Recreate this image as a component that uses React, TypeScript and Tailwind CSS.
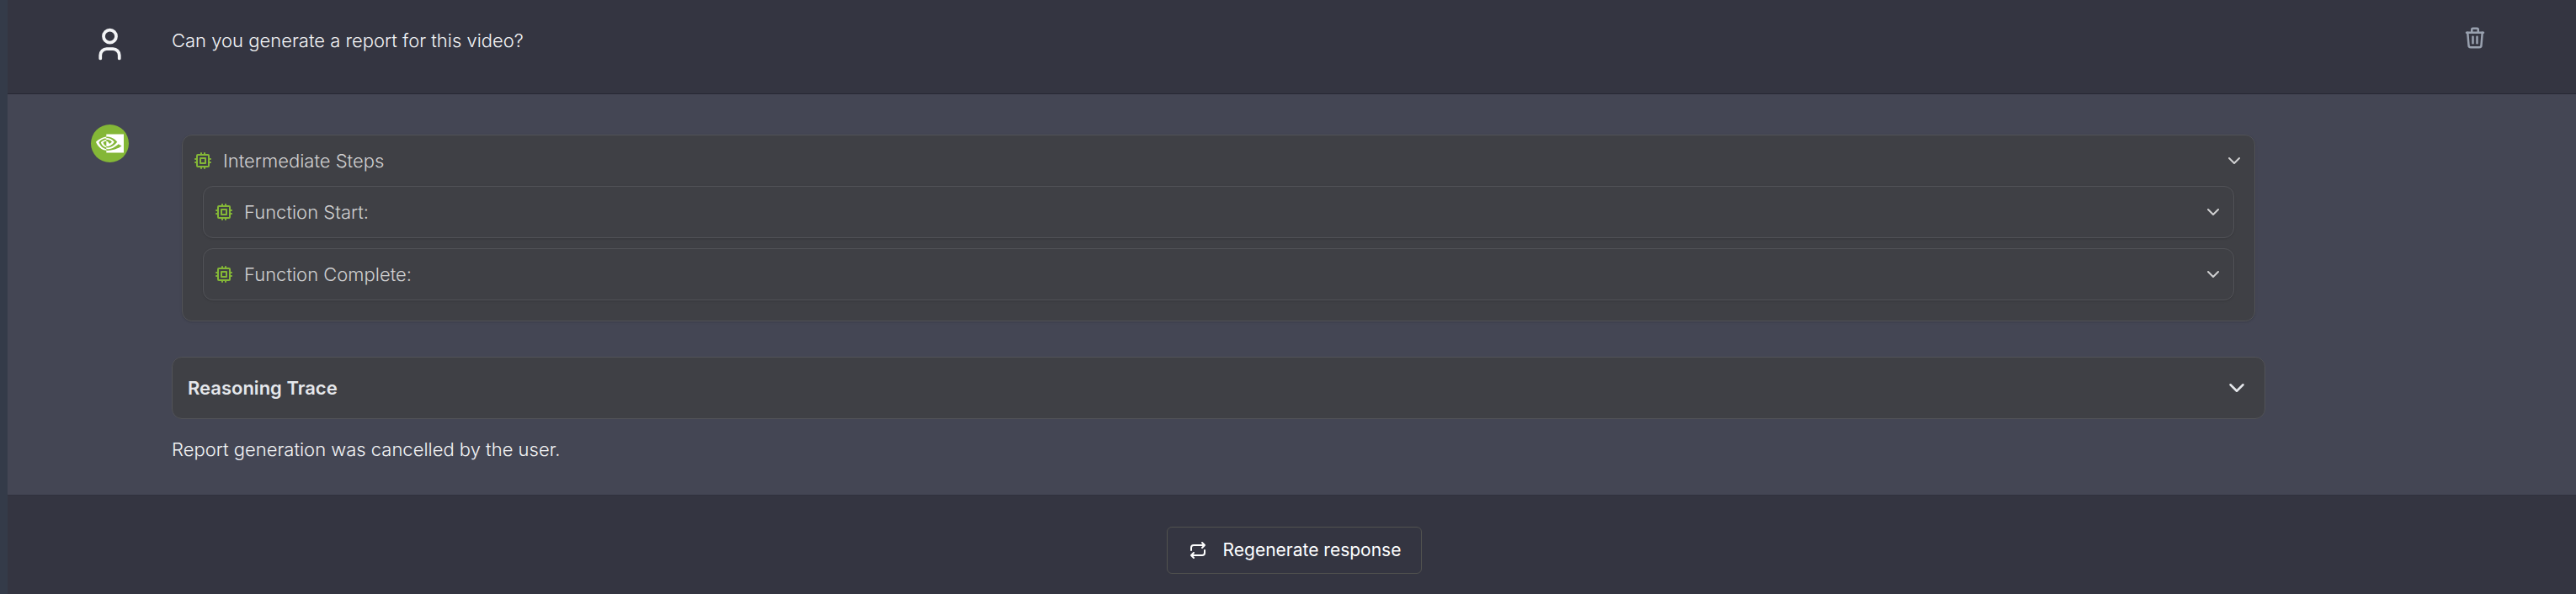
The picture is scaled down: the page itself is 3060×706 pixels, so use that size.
import { useState } from 'react'
import type { ReactNode } from 'react'
import { SiNvidia } from 'react-icons/si'

interface IconProps {
  className?: string
  children: ReactNode
}

function Icon({ className = 'size-6', children }: IconProps) {
  return (
    <svg
      className={`shrink-0 ${className}`}
      viewBox="0 0 24 24"
      fill="none"
      stroke="currentColor"
      strokeWidth={2}
      strokeLinecap="round"
      strokeLinejoin="round"
      aria-hidden="true"
    >
      {children}
    </svg>
  )
}

function UserIcon() {
  return (
    <Icon className="size-[45px] text-gray-100">
      <circle cx="12" cy="7" r="4" />
      <path d="M6 21v-2a4 4 0 0 1 4 -4h4a4 4 0 0 1 4 4v2" />
    </Icon>
  )
}

function TrashIcon() {
  return (
    <Icon className="size-[30px]">
      <path d="M4 7h16" />
      <path d="M10 11v6" />
      <path d="M14 11v6" />
      <path d="M5 7l1 12a2 2 0 0 0 2 2h8a2 2 0 0 0 2 -2l1 -12" />
      <path d="M9 7v-3a1 1 0 0 1 1 -1h4a1 1 0 0 1 1 1v3" />
    </Icon>
  )
}

function CpuIcon() {
  return (
    <Icon className="size-6 text-[#84b737]">
      <rect x="5" y="5" width="14" height="14" rx="1" />
      <path d="M9 9h6v6h-6z" />
      <path d="M3 10h2M3 14h2M10 3v2M14 3v2M21 10h-2M21 14h-2M14 21v-2M10 21v-2" />
    </Icon>
  )
}

function ChevronDown({ className }: { className?: string }) {
  return (
    <Icon className={className}>
      <path d="M6 9l6 6l6 -6" />
    </Icon>
  )
}

function RepeatIcon() {
  return (
    <Icon>
      <path d="M4 12v-3a3 3 0 0 1 3 -3h13m-3 -3l3 3l-3 3" />
      <path d="M20 12v3a3 3 0 0 1 -3 3h-13m3 3l-3 -3l3 -3" />
    </Icon>
  )
}

const STEPS = ['Function Start:', 'Function Complete:']

function StepHeader({ title }: { title: string }) {
  return (
    <button type="button" className="flex w-full items-center gap-3 p-3 text-left leading-9 text-[#d0d0d1]">
      <CpuIcon />
      <span className="flex-1">{title}</span>
      <ChevronDown />
    </button>
  )
}

function IntermediateSteps() {
  return (
    <section className="mx-3 rounded-xl border border-[#515257] bg-[#3f4045] pb-6 shadow-sm">
      <StepHeader title="Intermediate Steps" />
      <div className="mx-6 flex flex-col gap-3">
        {STEPS.map((step) => (
          <div key={step} className="rounded-xl border border-[#515257] shadow-sm">
            <StepHeader title={step} />
          </div>
        ))}
      </div>
    </section>
  )
}

function UserMessage({ text }: { text: string }) {
  return (
    <div className="flex items-start border-b border-[#262733] pt-[30px] pr-[105px] pb-9 pl-[99px]">
      <UserIcon />
      <p className="ml-[51px] flex-1 leading-9">{text}</p>
      <button type="button" aria-label="Delete message" className="text-gray-400">
        <TrashIcon />
      </button>
    </div>
  )
}

function AssistantMessage({ text }: { text: string }) {
  return (
    <div className="flex items-start border-b border-[#31323e] bg-[#444654] pt-9 pr-[369px] pb-9 pl-[99px]">
      <div className="flex size-[45px] shrink-0 items-center justify-center rounded-full bg-[#84b737]">
        <SiNvidia className="size-[33px] text-white" aria-label="NVIDIA" />
      </div>
      <div className="ml-[51px] flex-1 pt-3">
        <IntermediateSteps />
        <button
          type="button"
          className="mt-[42px] flex w-full items-center rounded-xl border border-[#515257] bg-[#3f4045] px-[18px] py-[18px] text-left leading-9 font-semibold text-gray-200"
        >
          <span className="flex-1">Reasoning Trace</span>
          <ChevronDown className="size-[30px]" />
        </button>
        <p className="mt-[18px] leading-9">{text}</p>
      </div>
    </div>
  )
}

export default function App() {
  const [cancelled] = useState(true)

  return (
    <div className="flex min-h-screen bg-[#343541] font-['Inter',sans-serif] text-[22px] font-light text-gray-100">
      {/* Sidebar edge */}
      <div className="w-[9px] shrink-0 bg-[#343b49]" />

      <main className="min-w-0 flex-1">
        <UserMessage text="Can you generate a report for this video?" />
        {cancelled && <AssistantMessage text="Report generation was cancelled by the user." />}

        {/* Actions */}
        <div className="flex justify-center pt-[37px] pb-6 pl-1.5">
          <button
            type="button"
            className="flex items-center gap-[18px] rounded-md border border-[#51524f] px-6 py-[9px] text-[21px] leading-9 font-normal text-white"
          >
            <RepeatIcon />
            Regenerate response
          </button>
        </div>
      </main>
    </div>
  )
}
